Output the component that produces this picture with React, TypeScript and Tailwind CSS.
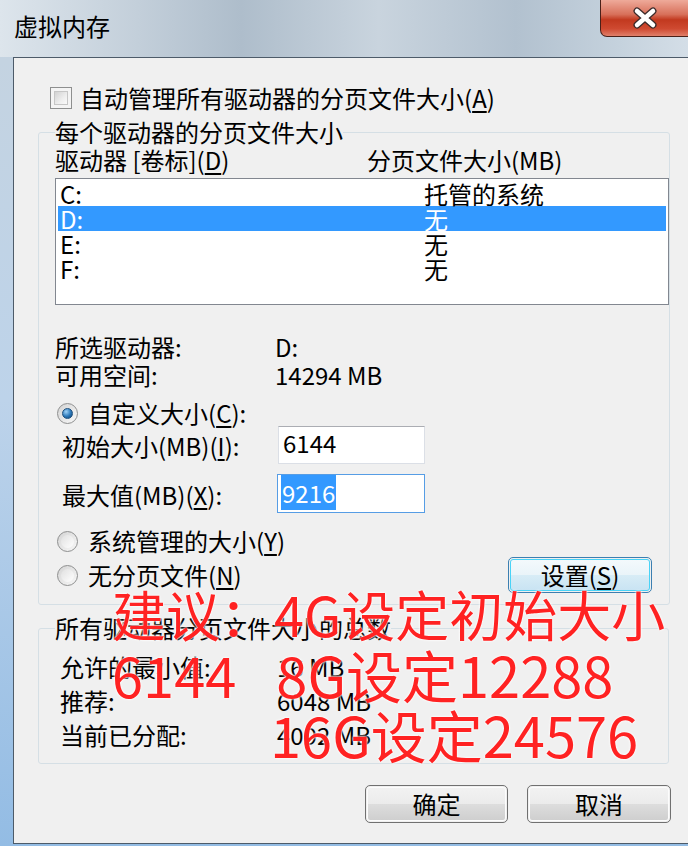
import React from 'react';

function Checkbox() {
  return (
    <div className="w-[22px] h-[22px] border border-[#8e8f8f] bg-[#f4f4f4] p-[3px]">
      <div className="w-full h-full border border-[#c6c6c6] bg-[linear-gradient(135deg,#d2d2d2,#eeeeee_60%,#fafafa)]" />
    </div>
  );
}

function Radio({ checked = false }: { checked?: boolean }) {
  return (
    <div className="w-[21px] h-[21px] rounded-full border border-[#8e8f8f] bg-[linear-gradient(135deg,#d4d4d4,#f8f8f8)] flex items-center justify-center">
      {checked ? (
        <div className="w-[11px] h-[11px] rounded-full bg-[radial-gradient(circle_at_35%_30%,#9fd2f7,#2a77b8_55%,#0f3f6e)] border border-[#1d4f7d]" />
      ) : (
        <div className="w-[13px] h-[13px] rounded-full bg-[linear-gradient(135deg,#e0e0e0,#ffffff)]" />
      )}
    </div>
  );
}

function WinButton({ children, focused = false }: { children: React.ReactNode; focused?: boolean }) {
  return (
    <div
      className={
        'h-full rounded-[5px] border flex items-center justify-center p-[1px] ' +
        (focused ? 'border-[#3c7fb1]' : 'border-[#707070]')
      }
    >
      <div
        className={
          'w-full h-full rounded-[3px] flex items-center justify-center border ' +
          (focused
            ? 'border-[#48d3f7] bg-[linear-gradient(#f3f9fc_0%,#eaf4f9_49%,#d8ecf6_50%,#c9e4f3_100%)]'
            : 'border-[#fcfcfc] bg-[linear-gradient(#f2f2f2_0%,#ebebeb_49%,#dddddd_50%,#cfcfcf_100%)]')
        }
      >
        {children}
      </div>
    </div>
  );
}

function U({ children }: { children: React.ReactNode }) {
  return <span className="underline underline-offset-[3px]">{children}</span>;
}

export default function App() {
  return (
    <div className="relative w-[688px] h-[846px] overflow-hidden bg-[linear-gradient(180deg,#c9d6e2_0px,#c4d3e1_60px,#bdd3ea_400px,#93bce4_846px)] font-['Noto_Sans_CJK_SC',sans-serif] text-[24px] leading-[24px] text-black">
      {/* title bar */}
      <div className="h-[57px] flex justify-between items-start bg-[linear-gradient(90deg,#dde5ec_0%,#c3cfda_20%,#aebdcb_35%,#c9d4de_55%,#b2c1cf_75%,#c5d2dd_90%,#d4dee7_100%)]">
        <div className="pl-[14px] pt-[12px] leading-[28px]">虚拟内存</div>
        <div className="w-[90px] h-[37px] mr-[-2px] rounded-bl-[7px] border border-t-0 border-[#4a2018] bg-[linear-gradient(#eeaa9a_0%,#d8705a_40%,#c2391f_55%,#cf4a31_80%,#e0806a_100%)] flex items-center justify-center">
          <svg width="30" height="22" viewBox="0 0 30 22">
            <path d="M7 4 L23 18 M23 4 L7 18" stroke="#3a2a2a" strokeWidth="7" strokeLinecap="round" />
            <path d="M7 4 L23 18 M23 4 L7 18" stroke="#ffffff" strokeWidth="4.5" strokeLinecap="round" />
          </svg>
        </div>
      </div>

      {/* client area */}
      <div className="ml-[13px] w-[675px] h-[787px] border-l border-t border-b border-[#4d5b69] bg-[#f0f0f0]">
        <div className="mt-[28px] pl-[36px] h-[24px] flex items-center gap-[8px]">
          <Checkbox />
          <span>
            自动管理所有驱动器的分页文件大小(<U>A</U>)
          </span>
        </div>

        <fieldset className="mt-[10px] ml-[24px] w-[631px] h-[485px] border border-[#d5dfe5] rounded-[3px]">
          <legend className="ml-[16px] leading-[24px]">每个驱动器的分页文件大小</legend>
          <div className="mt-[4px] pl-[16px] h-[24px] flex items-center">
            <span className="w-[312px]">
              驱动器 [卷标](<U>D</U>)
            </span>
            <span>分页文件大小(MB)</span>
          </div>

          <div className="mt-[6px] ml-[16px] w-[614px] h-[127px] border border-[#828790] bg-white pt-[2px] px-[2px]">
            {[
              ['C:', '托管的系统', false],
              ['D:', '无', true],
              ['E:', '无', false],
              ['F:', '无', false],
            ].map(([d, s, sel]) => (
              <div
                key={d as string}
                className={'h-[25px] flex items-center ' + (sel ? 'bg-[#3399ff] text-white' : '')}
              >
                <span className="w-[366px] pl-[2px]">{d}</span>
                <span>{s}</span>
              </div>
            ))}
          </div>

          <div className="mt-[28px] pl-[16px]">
            <div className="h-[28px] flex items-center">
              <span className="w-[220px]">所选驱动器:</span>
              <span>D:</span>
            </div>
            <div className="h-[28px] flex items-center">
              <span className="w-[220px]">可用空间:</span>
              <span>14294 MB</span>
            </div>
          </div>

          <div className="mt-[12px] pl-[18px] h-[24px] flex items-center gap-[10px]">
            <Radio checked />
            <span>
              自定义大小(<U>C</U>):
            </span>
          </div>

          <div className="mt-[1px] pl-[23px] h-[38px] flex items-center">
            <span className="w-[216px] pt-[2px]">
              初始大小(MB)(<U>I</U>):
            </span>
            <div className="w-[147px] h-[38px] border border-[#dbdfe6] border-t-[#abadb3] bg-white pl-[4px] pt-[4px]">
              6144
            </div>
          </div>

          <div className="mt-[10px] pl-[23px] h-[39px] flex items-center">
            <span className="w-[215px] pt-[2px]">
              最大值(MB)(<U>X</U>):
            </span>
            <div className="w-[148px] h-[39px] border border-[#569de5] bg-white pl-[3px] pt-[6px]">
              <span className="bg-[#3399ff] text-white px-[1px]">9216</span>
            </div>
          </div>

          <div className="mt-[16px] pl-[18px] h-[24px] flex items-center gap-[10px]">
            <Radio />
            <span>
              系统管理的大小(<U>Y</U>)
            </span>
          </div>

          <div className="mt-[4px] pl-[18px] pr-[17px] h-[36px] flex items-center justify-between">
            <div className="flex items-center gap-[10px]">
              <Radio />
              <span>
                无分页文件(<U>N</U>)
              </span>
            </div>
            <div className="w-[144px] h-[36px]">
              <WinButton focused>
                <span>
                  设置(<U>S</U>)
                </span>
              </WinButton>
            </div>
          </div>
        </fieldset>

        <fieldset className="mt-[11px] ml-[24px] w-[631px] h-[148px] border border-[#d5dfe5] rounded-[3px]">
          <legend className="ml-[16px] leading-[24px]">所有驱动器分页文件大小的总数</legend>
          <div className="mt-[10px] pl-[21px]">
            {[
              ['允许的最小值:', '16 MB'],
              ['推荐:', '6048 MB'],
              ['当前已分配:', '4092 MB'],
            ].map(([k, v]) => (
              <div key={k} className="h-[34px] flex items-center">
                <span className="w-[217px]">{k}</span>
                <span>{v}</span>
              </div>
            ))}
          </div>
        </fieldset>

        <div className="mt-[21px] pr-[17px] h-[38px] flex justify-end gap-[19px]">
          <div className="w-[143px] h-[38px]">
            <WinButton>确定</WinButton>
          </div>
          <div className="w-[144px] h-[38px]">
            <WinButton>取消</WinButton>
          </div>
        </div>
      </div>

      {/* red annotation over the dialog */}
      <div className="absolute left-[112px] top-[584px] text-[56px] leading-[60px] text-[#ff2222] [text-shadow:0_0_3px_#ffffff,0_0_2px_#ffffff] whitespace-nowrap">
        <div className="text-[54px]">建议：4G设定初始大小</div>
        <div>
          <span>6144</span>
          <span className="ml-[40px]">8G设定12288</span>
        </div>
        <div className="ml-[158px]">16G设定24576</div>
      </div>
    </div>
  );
}
